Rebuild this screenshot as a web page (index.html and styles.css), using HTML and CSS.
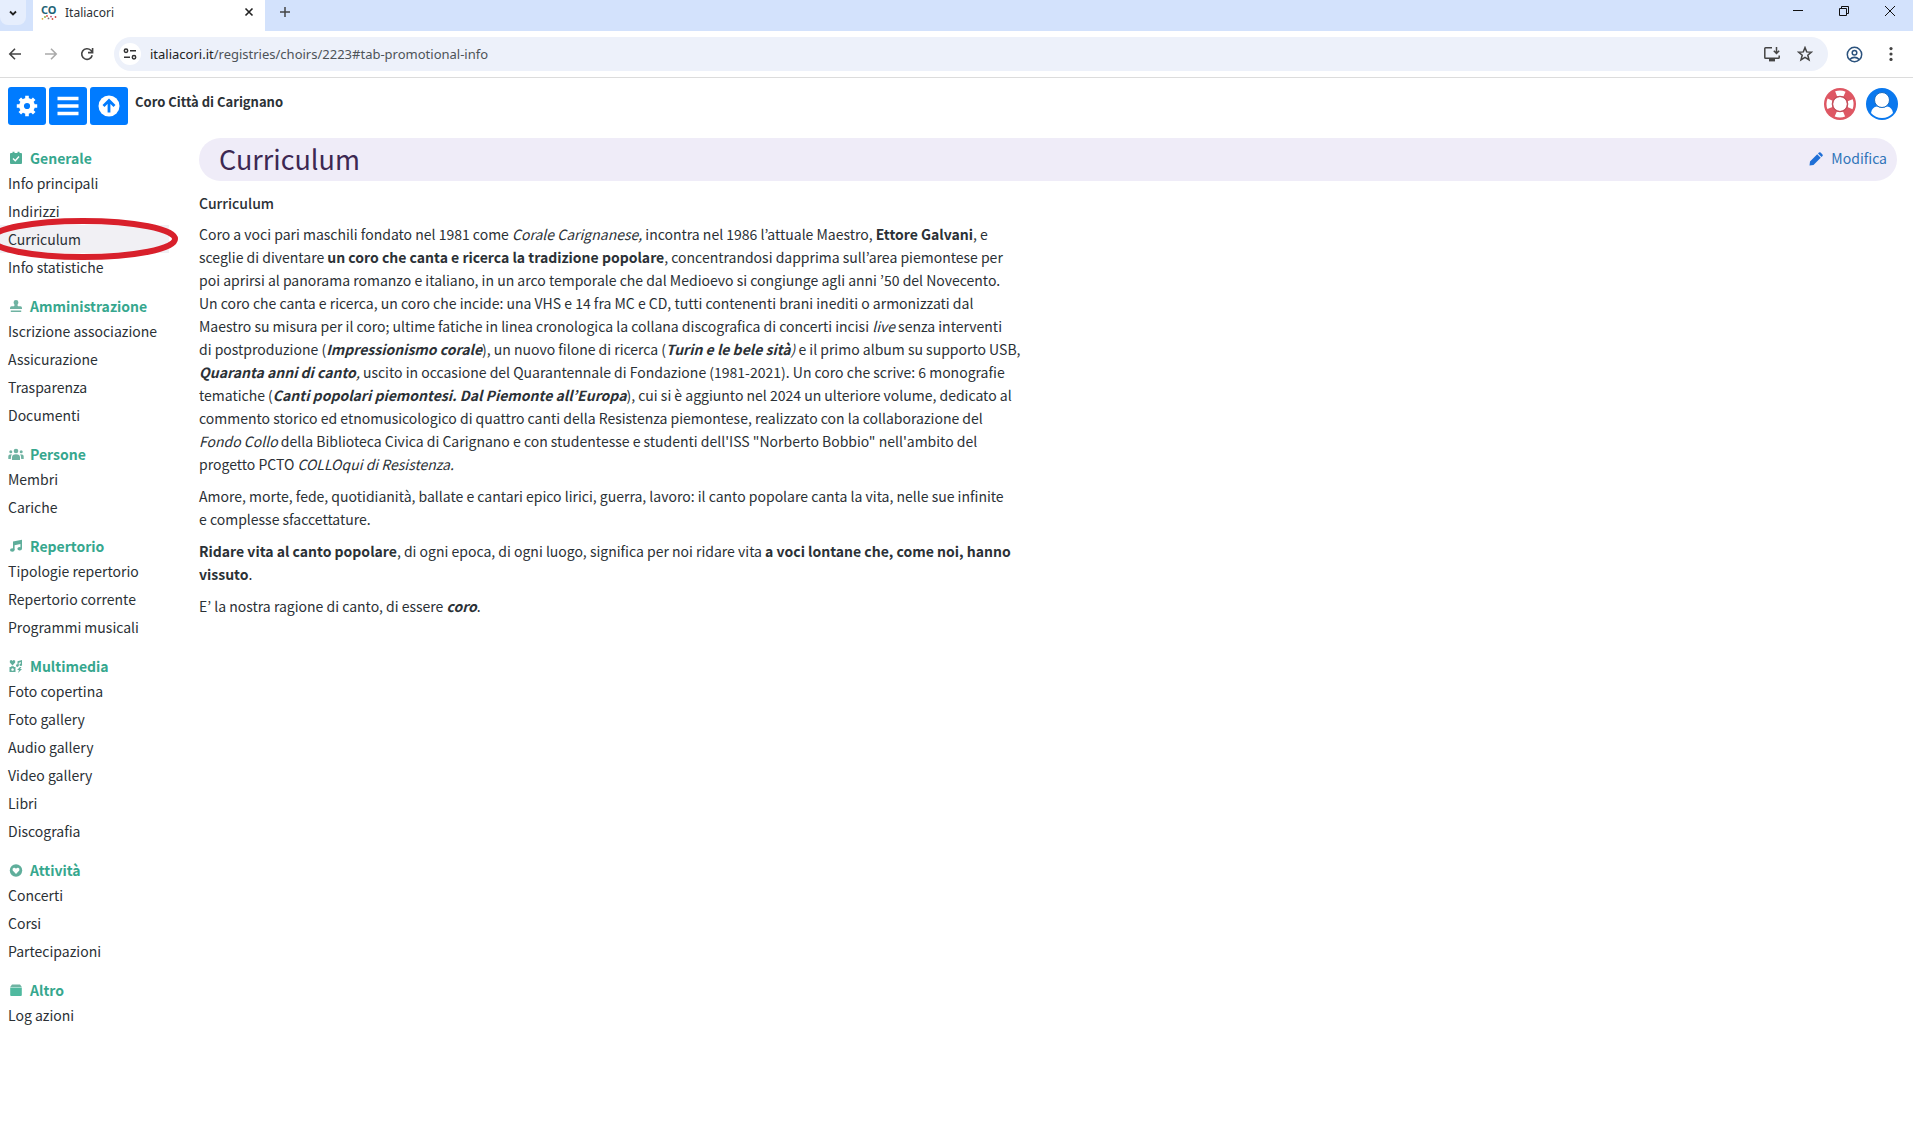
FILE: index.html
```
<!DOCTYPE html>
<html lang="it">
<head>
  <meta charset="UTF-8" />
  <meta name="viewport" content="width=device-width, initial-scale=1.0" />
  <title>Italiacori</title>
  <link rel="stylesheet" href="styles.css">
</head>
<body>

  <!-- Browser window -->
  <div class="tabstrip">
    <button class="tab-search" aria-label="Cerca nelle schede">
      <svg width="10" height="10" viewBox="0 0 10 10"><path d="M2 3.5l3 3 3-3" fill="none" stroke="#222" stroke-width="1.8"/></svg>
    </button>
    <div class="tab">
      <span class="favicon">CO
        <svg width="16" height="5" viewBox="0 0 16 5">
          <circle cx="1.5" cy="3.8" r=".9" fill="#e2a82d"/><circle cx="4" cy="2" r=".9" fill="#7fae3b"/><circle cx="6" cy="1" r=".9" fill="#d8533c"/>
          <circle cx="7.5" cy="3.4" r=".9" fill="#777"/><circle cx="10" cy="1.6" r=".9" fill="#b8467a"/><circle cx="11.5" cy="4" r=".9" fill="#d8533c"/><circle cx="14.5" cy="2" r=".9" fill="#c44"/>
        </svg>
      </span>
      <span class="tab-title">Italiacori</span>
      <button class="tab-close" aria-label="Chiudi scheda">
        <svg width="10" height="10" viewBox="0 0 10 10"><path d="M1.5 1.5l7 7M8.5 1.5l-7 7" stroke="#222" stroke-width="1.6"/></svg>
      </button>
    </div>
    <button class="tab-new" aria-label="Nuova scheda">
      <svg width="12" height="12" viewBox="0 0 12 12"><path d="M6 1v10M1 6h10" stroke="#444" stroke-width="1.5"/></svg>
    </button>
    <div class="window-buttons">
      <button aria-label="Riduci"><svg width="12" height="12" viewBox="0 0 12 12"><path d="M1 5.5h10" stroke="#111"/></svg></button>
      <button aria-label="Ripristina"><svg width="12" height="12" viewBox="0 0 12 12"><path d="M1.5 3.5h7v7h-7zM3.5 3.5v-2h7v7h-2" fill="none" stroke="#111"/></svg></button>
      <button aria-label="Chiudi"><svg width="12" height="12" viewBox="0 0 12 12"><path d="M1 1l10 10M11 1L1 11" stroke="#111"/></svg></button>
    </div>
  </div>

  <div class="toolbar">
    <div class="nav-buttons">
      <button aria-label="Indietro"><svg width="14" height="14" viewBox="0 0 14 14"><path d="M13 7H2M7 1.8L1.8 7 7 12.2" fill="none" stroke="#444" stroke-width="1.6"/></svg></button>
      <button aria-label="Avanti" disabled><svg width="14" height="14" viewBox="0 0 14 14"><path d="M1 7h11M7 1.8L12.2 7 7 12.2" fill="none" stroke="#aaa" stroke-width="1.6"/></svg></button>
      <button aria-label="Ricarica"><svg width="14" height="14" viewBox="0 0 14 14"><path d="M12.2 8.2A5.3 5.3 0 1 1 10.8 3.3L12.4 5M12.6 1v4.6H8" fill="none" stroke="#444" stroke-width="1.6"/></svg></button>
    </div>
    <div class="omnibox">
      <button class="site-info" aria-label="Informazioni sul sito">
        <svg width="14" height="12" viewBox="0 0 14 12" fill="none" stroke="#333" stroke-width="1.5"><circle cx="3" cy="2.8" r="1.7"/><path d="M7 2.8h6M1 9.2h6"/><circle cx="11" cy="9.2" r="1.7"/></svg>
      </button>
      <span class="url"><b>italiacori.it</b>/registries/choirs/2223#tab-promotional-info</span>
      <button aria-label="Installa"><svg width="18" height="16" viewBox="0 0 18 16" fill="none" stroke="#444" stroke-width="1.5"><path d="M9 1.8H2.6q-.8 0-.8.8v8.8q0 .8.8.8h12.8q.8 0 .8-.8V9.5M13.5 1v6M10.8 4.8l2.7 2.7 2.7-2.7"/><path d="M6 14.2h6" stroke-width="2.4"/></svg></button>
      <button aria-label="Preferiti"><svg width="16" height="16" viewBox="0 0 16 16"><path d="M8 1.6L9.700 5.900 14.4 6.200 10.800 9.200 12 13.800 8 11.300 4 13.800 5.200 9.200 1.600 6.200 6.300 5.900z" fill="none" stroke="#444" stroke-width="1.5"/></svg></button>
    </div>
    <div class="chrome-buttons">
      <button aria-label="Profilo"><svg width="17" height="17" viewBox="0 0 17 17" fill="none" stroke="#2b527d" stroke-width="1.5"><circle cx="8.5" cy="8.5" r="7.2"/><circle cx="8.5" cy="6.8" r="2.3"/><path d="M3.6 13.6q4.9-4.4 9.8 0"/></svg></button>
      <button aria-label="Menu"><svg width="16" height="16" viewBox="0 0 16 16" fill="#444"><circle cx="8" cy="2.6" r="1.6"/><circle cx="8" cy="8" r="1.6"/><circle cx="8" cy="13.4" r="1.6"/></svg></button>
    </div>
  </div>

  <!-- Page header -->
  <header class="topbar">
    <div class="topbar-left">
      <button class="btn" aria-label="Impostazioni">
        <svg width="22" height="22" viewBox="0 0 22 22"><circle cx="11" cy="11" r="5.5" fill="none" stroke="#fff" stroke-width="4.8"/><path d="M11 .8v4M11 17.2v4M.8 11h4M17.2 11h4M3.8 3.8l2.8 2.8M15.4 15.4l2.8 2.8M18.2 3.8l-2.8 2.8M6.6 15.4l-2.8 2.8" stroke="#fff" stroke-width="3.6"/></svg>
      </button>
      <button class="btn" aria-label="Menu">
        <svg width="22" height="22" viewBox="0 0 22 22"><path d="M.5 3.500h21M.5 11h21M.5 18.500h21" stroke="#fff" stroke-width="3.400"/></svg>
      </button>
      <button class="btn" aria-label="Torna su">
        <svg width="22" height="22" viewBox="0 0 22 22"><circle cx="11" cy="11" r="10.5" fill="#fff"/><path d="M11 17.5V6M5.5 11L11 5.5l5.5 5.5" fill="none" stroke="#007bff" stroke-width="2.8"/></svg>
      </button>
      <strong class="choir-name">Coro Città di Carignano</strong>
    </div>
    <div class="topbar-right">
      <button aria-label="Aiuto">
        <svg width="32" height="32" viewBox="0 0 32 32"><circle cx="16" cy="16" r="16" fill="#de5763"/><circle cx="16" cy="16" r="10.8" fill="none" stroke="#fff" stroke-width="5.5" stroke-dasharray="8.5 8.46" stroke-dashoffset="4.25"/><circle cx="16" cy="16" r="7" fill="#fff"/><circle cx="16" cy="16" r="7.6" fill="none" stroke="#c2505c" stroke-width="1.4"/></svg>
      </button>
      <button aria-label="Utente">
        <svg width="32" height="32" viewBox="0 0 32 32"><circle cx="16" cy="16" r="16" fill="#0a78ee"/><path d="M5 25q1-6 6-6.5 5 2.5 10 0 5 .5 6 6.5-4.500 5-11 5T5 25z" fill="#fff"/><circle cx="16" cy="12" r="7.5" fill="#fff" stroke="#1b6cc0"/></svg>
      </button>
    </div>
  </header>

  <div class="layout">
    <nav class="sidebar">
      <h2><svg width="16" height="14" viewBox="0 0 16 14"><path d="M3 2h1.500V.8h2V2h3V.8h2V2H13q1 0 1 1v9q0 1-1 1H3q-1 0-1-1V3q0-1 1-1z" fill="#4fae96"/><path d="M5 7.500l2.300 2.300L11 5.500" fill="none" stroke="#fff" stroke-width="1.4"/></svg>Generale</h2>
      <ul>
        <li><a href="#">Info principali</a></li>
        <li><a href="#">Indirizzi</a></li>
        <li class="active"><a href="#">Curriculum</a>
          <svg class="marker" width="192" height="42" viewBox="0 0 192 42"><ellipse cx="96" cy="21" rx="92" ry="18" fill="none" stroke="#d8202b" stroke-width="6"/></svg>
        </li>
        <li><a href="#">Info statistiche</a></li>
      </ul>

      <h2><svg width="16" height="14" viewBox="0 0 16 14"><path d="M8 1q2.400 0 2.400 2.200 0 1.200-.8 2.300-.3 1.500.6 1.800h2.300q1.500 0 1.500 1.700v1H2V9q0-1.700 1.500-1.700h2.300q.9-.3.6-1.800-.8-1.100-.8-2.300Q5.600 1 8 1zM2.800 11.500h10.400V13H2.800z" fill="#6fb3a2"/></svg>Amministrazione</h2>
      <ul>
        <li><a href="#">Iscrizione associazione</a></li>
        <li><a href="#">Assicurazione</a></li>
        <li><a href="#">Trasparenza</a></li>
        <li><a href="#">Documenti</a></li>
      </ul>

      <h2><svg width="16" height="14" viewBox="0 0 16 14" fill="#6fb3a2"><circle cx="8" cy="4" r="2.3"/><circle cx="2.8" cy="4.8" r="1.5"/><circle cx="13.2" cy="4.8" r="1.5"/><path d="M4 13v-2.500Q4 7.200 8 7.200t4 3.300V13zM.3 12V9.500Q.3 7.300 3.800 7.300 2.800 8.700 2.800 12zM15.700 12V9.500q0-2.200-3.500-2.200 1 1.400 1 4.700z"/></svg>Persone</h2>
      <ul>
        <li><a href="#">Membri</a></li>
        <li><a href="#">Cariche</a></li>
      </ul>

      <h2><svg width="16" height="14" viewBox="0 0 16 14" fill="#5fae9b"><path d="M5 2.500L14 .8v9h-1.600V5L6.600 6.200V11H5z"/><ellipse cx="4.3" cy="11" rx="2.3" ry="1.8"/><ellipse cx="11.7" cy="9.8" rx="2.3" ry="1.8"/></svg>Repertorio</h2>
      <ul>
        <li><a href="#">Tipologie repertorio</a></li>
        <li><a href="#">Repertorio corrente</a></li>
        <li><a href="#">Programmi musicali</a></li>
      </ul>

      <h2><svg width="16" height="14" viewBox="0 0 16 14" fill="#5fae9b"><path d="M4.500 6.500L1.800 3.600Q1.300 1.200 3 1q1 0 1.500.9Q5 1 6 1q1.700.2 1.200 2.600zM9.500 2.300L14 1v4.800h-1V3.200l-2.300.6v3h-1.200zM12 8l-3 3h2l-1 3 4-4h-2l1.500-2z"/><circle cx="9.3" cy="6.6" r="1.3"/><circle cx="12.8" cy="5.8" r="1.3"/><path d="M2.800 8l.6-.8h2.200l.6.800h1.300v5H1.500V8zM4.500 9.200a1.300 1.300 0 1 0 .1 0z" fill-rule="evenodd"/></svg>Multimedia</h2>
      <ul>
        <li><a href="#">Foto copertina</a></li>
        <li><a href="#">Foto gallery</a></li>
        <li><a href="#">Audio gallery</a></li>
        <li><a href="#">Video gallery</a></li>
        <li><a href="#">Libri</a></li>
        <li><a href="#">Discografia</a></li>
      </ul>

      <h2><svg width="16" height="14" viewBox="0 0 16 14"><circle cx="8" cy="7.5" r="6.2" fill="#5fae9b"/><path d="M8 11L4.700 7.500q-.8-2.300 1.100-2.800Q7.300 4.600 8 5.800q.7-1.200 2.200-1.100 1.900.5 1.100 2.800z" fill="#fff"/></svg>Attività</h2>
      <ul>
        <li><a href="#">Concerti</a></li>
        <li><a href="#">Corsi</a></li>
        <li><a href="#">Partecipazioni</a></li>
      </ul>

      <h2><svg width="16" height="14" viewBox="0 0 16 14"><path d="M4 1.500h8L13.800 4H2.200z" fill="#6fb3a2"/><path d="M2.200 4.500h11.600V12q0 1-1 1H3.200q-1 0-1-1z" fill="#4fb99f"/></svg>Altro</h2>
      <ul>
        <li><a href="#">Log azioni</a></li>
      </ul>
    </nav>

    <main class="content">
      <div class="section-title">
        <h1>Curriculum</h1>
        <a href="#" class="edit">
          <svg width="14" height="14" viewBox="0 0 14 14" fill="#1f6fd6"><path d="M1 9.500L8.200 2.300l3.500 3.500L4.500 13 .5 13.500zM9 1.500l1-1q.8-.6 1.600 0l1.900 1.900q.6.800 0 1.600l-1 1z"/></svg>
          Modifica
        </a>
      </div>
      <div class="bio">
        <h3>Curriculum</h3>
        <p>Coro a voci pari maschili fondato nel 1981 come <em>Corale Carignanese,</em> incontra nel 1986 l’attuale Maestro, <strong>Ettore Galvani</strong>, e sceglie di diventare <strong>un coro che canta e ricerca la tradizione popolare</strong>, concentrandosi dapprima sull’area piemontese per poi aprirsi al panorama romanzo e italiano, in un arco temporale che dal Medioevo si congiunge agli anni ’50 del Novecento. Un&nbsp;coro che canta e ricerca, un coro che incide: una VHS e 14 fra MC e CD, tutti contenenti brani inediti o armonizzati dal Maestro su misura per il coro; ultime fatiche in linea cronologica la collana discografica di concerti incisi <em>live</em> senza interventi di&nbsp;postproduzione (<strong><em>Impressionismo corale</em></strong>), un nuovo filone di ricerca (<strong><em>Turin e le bele sità</em></strong><em>)</em> e il primo album su supporto USB, <strong><em>Quaranta anni di canto</em></strong><em>,</em> uscito in occasione del Quarantennale di Fondazione (1981-2021). Un coro che scrive: 6 monografie tematiche (<strong><em>Canti popolari piemontesi. Dal Piemonte all’Europa</em></strong>), cui si è aggiunto nel 2024 un ulteriore volume, dedicato al commento storico ed etnomusicologico di quattro canti della Resistenza piemontese, realizzato con la collaborazione del <em>Fondo&nbsp;Collo</em> della Biblioteca Civica di Carignano e con studentesse e studenti dell'ISS "Norberto Bobbio" nell'ambito del progetto PCTO <em>COLLOqui di Resistenza.</em></p>
        <p>Amore, morte, fede, quotidianità, ballate e cantari epico lirici, guerra, lavoro: il canto popolare canta la vita, nelle sue infinite e&nbsp;complesse sfaccettature.</p>
        <p><strong>Ridare vita al canto popolare</strong>, di ogni epoca, di ogni luogo, significa per noi ridare vita <strong>a voci lontane che, come noi, hanno vissuto</strong>.</p>
        <p>E’ la nostra ragione di canto, di essere <strong><em>coro</em></strong>.</p>
      </div>
    </main>
  </div>

</body>
</html>
```
FILE: styles.css
```
* {
  box-sizing: border-box;
}

body {
  margin: 0;
  background-color: #fff;
  color: #2b3136;
  font-family: "Noto Sans CJK KR", "Open Sans", sans-serif;
  font-size: 14px;
  line-height: 23px;
}

button {
  display: flex;
  align-items: center;
  justify-content: center;
  padding: 0;
  border: 0;
  background: none;
}

a {
  color: inherit;
  text-decoration: none;
}

h1, h2, h3, p, ul {
  margin: 0;
  padding: 0;
}

svg {
  display: block;
  flex: none;
}

/* Browser window */
.tabstrip {
  display: flex;
  height: 31px;
  background-color: #d3e2fc;
  font-family: "Noto Sans", sans-serif;
}

.tab-search {
  width: 26px;
  height: 25px;
  margin-right: 7px;
  border-radius: 0 0 8px 8px;
  background-color: #e6eefd;
}

.tab {
  display: flex;
  align-items: center;
  width: 232px;
  padding: 0 11px 7px 8px;
  background-color: #fff;
}

.favicon {
  width: 16px;
  margin-right: 8px;
  color: #1f6476;
  font-size: 11px;
  font-weight: bold;
  line-height: 11px;
}

.tab-title {
  flex: 1;
  font-size: 12px;
}

.tab-new {
  width: 40px;
  height: 23px;
}

.window-buttons {
  display: flex;
  margin-left: auto;
}

.window-buttons button {
  width: 46px;
  height: 22px;
}

.toolbar {
  display: flex;
  align-items: center;
  height: 47px;
  border-bottom: 1px solid #dcdcdc;
}

.nav-buttons {
  display: flex;
  gap: 22px;
  padding: 0 20px 0 8px;
}

.omnibox {
  display: flex;
  flex: 1;
  align-items: center;
  gap: 16px;
  height: 34px;
  padding: 0 15px 0 5px;
  border-radius: 17px;
  background-color: #edf1fa;
}

.site-info {
  width: 22px;
  height: 22px;
  margin-right: -7px;
  border-radius: 50%;
  background-color: #fff;
}

.url {
  flex: 1;
  color: #4d5358;
  font-family: "Noto Sans", sans-serif;
  font-size: 13px;
}

.url b {
  color: #222;
  font-weight: normal;
}

.chrome-buttons {
  display: flex;
  gap: 20px;
  padding: 0 14px 0 18px;
}

/* Page header */
.topbar {
  display: flex;
  justify-content: space-between;
  padding: 9px 15px 0 8px;
}

.topbar-left {
  display: flex;
  gap: 3px;
}

.btn {
  width: 38px;
  height: 38px;
  border-radius: 3px;
  background-color: #007bff;
}

.choir-name {
  margin-left: 4px;
  padding-top: 3px;
  font-size: 13px;
}

.topbar-right {
  display: flex;
  align-items: flex-start;
  gap: 10px;
  padding-top: 1px;
}

/* Sidebar */
.layout {
  display: flex;
  padding-top: 13px;
}

.sidebar {
  width: 199px;
  padding-top: 9px;
}

.sidebar h2 {
  display: flex;
  align-items: center;
  gap: 6px;
  padding-left: 8px;
  color: #36a78e;
  font-size: 14px;
  line-height: 22px;
}

.sidebar ul {
  margin-bottom: 14px;
  list-style: none;
}

.sidebar li {
  position: relative;
  margin-right: 30px;
  padding-left: 8px;
  line-height: 28px;
}

.sidebar .active {
  background-color: #f1f0f4;
}

/* Red ring round the current entry */
.marker {
  position: absolute;
  top: -7px;
  left: -13px;
  z-index: 1;
}

/* Content */
.content {
  flex: 1;
  margin-right: 16px;
}

.section-title {
  display: flex;
  align-items: center;
  justify-content: space-between;
  height: 43px;
  padding: 0 10px 2px 20px;
  border-radius: 22px;
  background-color: #efecf8;
}

.section-title h1 {
  color: #3d2852;
  font-size: 27px;
  font-weight: normal;
}

.edit {
  display: flex;
  align-items: center;
  gap: 8px;
  color: #2f74b8;
}

.bio {
  width: 50%;
  padding: 11px 26px 0 0;
}

.bio h3 {
  margin-bottom: 8px;
  font-size: 14px;
  font-weight: 500;
}

.bio p {
  margin-bottom: 9px;
}
```
